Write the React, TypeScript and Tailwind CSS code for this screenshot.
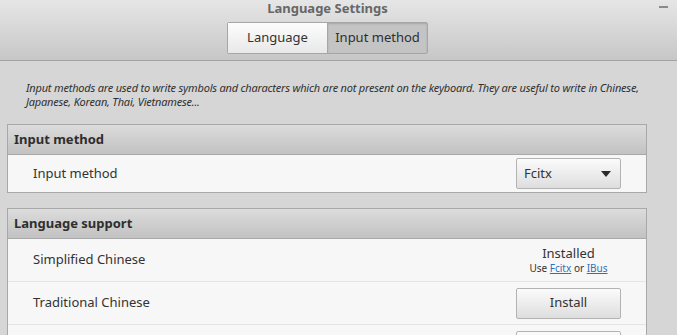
import React from "react";

const font = { fontFamily: '"Noto Sans", "Open Sans", sans-serif' };

function Panel({ title, children }: { title: string; children: React.ReactNode }) {
  return (
    <div className="mx-[7px] w-[640px] border border-[#a9a9a9] bg-[#f7f7f7]">
      <div className="h-[30px] flex items-center px-[6px] bg-gradient-to-b from-[#dcdcdc] to-[#c2c2c2] border-b border-[#a9a9a9] text-[13px] font-bold text-[#2e2e2e]">
        {title}
      </div>
      {children}
    </div>
  );
}

function Button({ children, dropdown }: { children?: React.ReactNode; dropdown?: boolean }) {
  return (
    <div
      className={`w-[105px] h-[31px] flex items-center rounded-[2px] border border-[#b3b3b3] bg-gradient-to-b from-[#fbfbfb] to-[#dedede] text-[13px] text-[#333] ${
        dropdown ? "justify-between pl-[7px] pr-[9px]" : "justify-center"
      }`}
    >
      {children}
      {dropdown && (
        <svg width="10" height="6" viewBox="0 0 10 6">
          <path d="M0 0 L10 0 L5 6 Z" fill="#2a2a2a" />
        </svg>
      )}
    </div>
  );
}

export default function App() {
  return (
    <div className="w-[677px] h-[335px] overflow-hidden bg-[#d6d6d6] text-[#333]" style={font}>
      {/* Title bar */}
      <div className="relative h-[61px] pr-[22px] bg-gradient-to-b from-[#e6e6e6] to-[#c7c7c7] border-b border-[#a3a3a3] flex flex-col items-center">
        <div className="mt-[-1px] text-[13px] font-bold text-[#676767]">Language Settings</div>
        <div className="mt-[3px] flex h-[32px] border border-[#a6a6a6] rounded-[2px] text-[13px]">
          <div className="w-[99px] flex items-center justify-center bg-gradient-to-b from-[#fdfdfd] to-[#e8e8e8] text-[#333]">
            Language
          </div>
          <div className="w-[100px] flex items-center justify-center bg-[#c4c4c4] border-l border-[#a6a6a6] text-[#2e2e2e] shadow-[inset_0_1px_2px_rgba(0,0,0,0.15)]">
            Input method
          </div>
        </div>
        <div className="absolute right-[9px] top-[6px] w-[9px] h-[2px] bg-[#8a8a8a]" />
      </div>

      {/* Description */}
      <div className="pl-[26px] pr-[4px] pt-[20px] text-[11px] italic leading-[14px] tracking-[-0.2px] text-[#303030]">
        Input methods are used to write symbols and characters which are not present on the keyboard. They are useful to write in Chinese,
        Japanese, Korean, Thai, Vietnamese...
      </div>

      <div className="mt-[15px]">
        <Panel title="Input method">
          <div className="h-[37px] flex items-center justify-between pl-[25px] pr-[25px] text-[13px]">
            <span>Input method</span>
            <Button dropdown>Fcitx</Button>
          </div>
        </Panel>
      </div>

      <div className="mt-[15px]">
        <Panel title="Language support">
          <div className="h-[43px] flex items-center justify-between pl-[25px] pr-[25px] border-b border-[#e4e4e4] text-[13px]">
            <span>Simplified Chinese</span>
            <div className="w-[105px] flex flex-col items-center leading-none">
              <span className="text-[13px] text-[#333]">Installed</span>
              <span className="mt-[3px] text-[10px] text-[#333]">
                Use <span className="text-[#2f6fc0] underline">Fcitx</span> or{" "}
                <span className="text-[#2f6fc0] underline">IBus</span>
              </span>
            </div>
          </div>
          <div className="h-[43px] flex items-center justify-between pl-[25px] pr-[25px] border-b border-[#e4e4e4] text-[13px]">
            <span>Traditional Chinese</span>
            <Button>Install</Button>
          </div>
          <div className="h-[43px] flex items-center justify-end pl-[25px] pr-[25px] text-[13px]">
            <Button />
          </div>
        </Panel>
      </div>
    </div>
  );
}
